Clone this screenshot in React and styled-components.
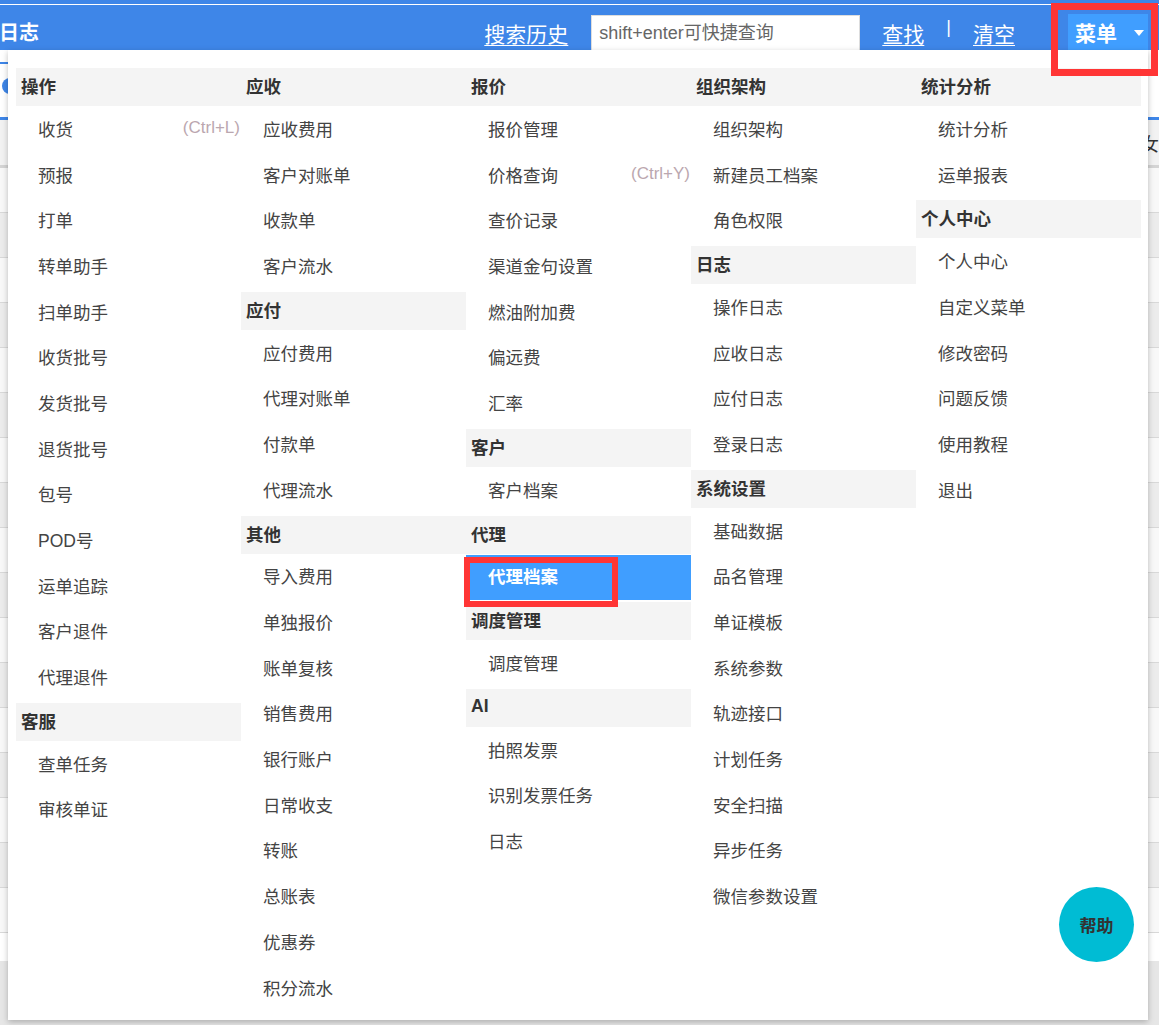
import React from "react";
import styled, { createGlobalStyle } from "styled-components";

const GlobalStyle = createGlobalStyle`
  html, body {
    margin: 0;
    padding: 0;
    background: #e6e6e6;
    font-family: "Liberation Sans", "Noto Sans CJK SC", sans-serif;
  }
  * { box-sizing: border-box; }
`;

const BLUE = "#3e86e8";
const ACTIVE = "#409eff";

const menuColumns = [
  [
    {
      title: "操作",
      items: [
        { label: "收货", shortcut: "(Ctrl+L)" },
        { label: "预报" },
        { label: "打单" },
        { label: "转单助手" },
        { label: "扫单助手" },
        { label: "收货批号" },
        { label: "发货批号" },
        { label: "退货批号" },
        { label: "包号" },
        { label: "POD号" },
        { label: "运单追踪" },
        { label: "客户退件" },
        { label: "代理退件" },
      ],
    },
    { title: "客服", items: [{ label: "查单任务" }, { label: "审核单证" }] },
  ],
  [
    {
      title: "应收",
      items: [{ label: "应收费用" }, { label: "客户对账单" }, { label: "收款单" }, { label: "客户流水" }],
    },
    {
      title: "应付",
      items: [{ label: "应付费用" }, { label: "代理对账单" }, { label: "付款单" }, { label: "代理流水" }],
    },
    {
      title: "其他",
      items: [
        { label: "导入费用" },
        { label: "单独报价" },
        { label: "账单复核" },
        { label: "销售费用" },
        { label: "银行账户" },
        { label: "日常收支" },
        { label: "转账" },
        { label: "总账表" },
        { label: "优惠券" },
        { label: "积分流水" },
      ],
    },
  ],
  [
    {
      title: "报价",
      items: [
        { label: "报价管理" },
        { label: "价格查询", shortcut: "(Ctrl+Y)" },
        { label: "查价记录" },
        { label: "渠道金句设置" },
        { label: "燃油附加费" },
        { label: "偏远费" },
        { label: "汇率" },
      ],
    },
    { title: "客户", items: [{ label: "客户档案" }] },
    { title: "代理", items: [{ label: "代理档案", active: true }] },
    { title: "调度管理", items: [{ label: "调度管理" }] },
    { title: "AI", items: [{ label: "拍照发票" }, { label: "识别发票任务" }, { label: "日志" }] },
  ],
  [
    {
      title: "组织架构",
      items: [{ label: "组织架构" }, { label: "新建员工档案" }, { label: "角色权限" }],
    },
    {
      title: "日志",
      items: [{ label: "操作日志" }, { label: "应收日志" }, { label: "应付日志" }, { label: "登录日志" }],
    },
    {
      title: "系统设置",
      items: [
        { label: "基础数据" },
        { label: "品名管理" },
        { label: "单证模板" },
        { label: "系统参数" },
        { label: "轨迹接口" },
        { label: "计划任务" },
        { label: "安全扫描" },
        { label: "异步任务" },
        { label: "微信参数设置" },
      ],
    },
  ],
  [
    { title: "统计分析", items: [{ label: "统计分析" }, { label: "运单报表" }] },
    {
      title: "个人中心",
      items: [
        { label: "个人中心" },
        { label: "自定义菜单" },
        { label: "修改密码" },
        { label: "问题反馈" },
        { label: "使用教程" },
        { label: "退出" },
      ],
    },
  ],
];

/* ---------- page behind the dropdown ---------- */

const Page = styled.div`
  position: relative;
  width: 1159px;
  height: 1025px;
  overflow: hidden;
  background: #e6e6e6;
`;

const TopLine = styled.div`
  height: 5px;
  background: ${BLUE};
  border-bottom: 1px solid #fff;
`;

const Header = styled.div`
  height: 45px;
  background: ${BLUE};
  display: flex;
  align-items: flex-end;
  color: #fff;
`;

const Title = styled.div`
  font-family: "Noto Sans CJK SC", sans-serif;
  font-weight: 700;
  font-size: 20px;
  line-height: 20px;
  margin-left: -1px;
  padding-bottom: 8px;
`;

const Tools = styled.div`
  margin-left: auto;
  display: flex;
  align-items: flex-end;
  height: 100%;
`;

const HeadLink = styled.span`
  font-family: "Noto Sans CJK SC", sans-serif;
  font-size: 21px;
  line-height: 21px;
  text-decoration: underline;
  text-underline-offset: 3px;
  text-decoration-thickness: 1px;
  padding-bottom: 6px;
  margin-left: ${(p) => p.$gap || 0}px;
`;

const Divider = styled.span`
  font-size: 18px;
  line-height: 18px;
  padding-bottom: 14px;
  margin-left: 22px;
`;

const SearchInput = styled.input`
  width: 269px;
  height: 35px;
  margin-left: 23px;
  border: 1px solid #ddd;
  border-bottom: none;
  padding: 0 7px;
  font-size: 18px;
  font-family: "Liberation Sans", "Noto Sans CJK SC", sans-serif;
  color: #333;
  outline: none;
  &::placeholder {
    color: #666;
  }
`;

const MenuButton = styled.div`
  width: 80px;
  height: 36px;
  margin-left: 53px;
  margin-right: 11px;
  background: ${ACTIVE};
  display: flex;
  align-items: center;
  padding-left: 7px;
  font-family: "Noto Sans CJK SC", sans-serif;
  font-weight: 700;
  font-size: 21px;
  color: #fff;
`;

const Caret = styled.span`
  margin-left: 17px;
  width: 0;
  height: 0;
  border-left: 5px solid transparent;
  border-right: 5px solid transparent;
  border-top: 6px solid #fff;
  margin-top: 2px;
`;

const SubBar = styled.div`
  height: 70px;
  background: #fff;
  border-bottom: 3px solid ${BLUE};
`;

const Tab = styled.div`
  width: 120px;
  height: 14px;
  border-bottom: 2px solid ${BLUE};
`;

const RoundBtn = styled.div`
  width: 30px;
  height: 16px;
  margin-top: 14px;
  margin-left: 2px;
  border-radius: 8px;
  background: ${BLUE};
`;

const Table = styled.div`
  display: flex;
  flex-direction: column;
  background: #fff;
  padding-bottom: 28px;
`;

const HeadRow = styled.div`
  height: 48px;
  background: #f2f2f2;
  border-bottom: 3px solid #d4d4d4;
  display: flex;
  align-items: center;
  justify-content: flex-end;
  font-family: "Noto Sans CJK SC", sans-serif;
  font-size: 18px;
  color: #333;
`;

const Row = styled.div`
  height: 45px;
  border-bottom: 1px solid #d8d8d8;
  background: ${(p) => (p.$alt ? "#ececec" : "#f8f8f8")};
`;

/* ---------- dropdown ---------- */

const Dropdown = styled.div`
  position: absolute;
  left: 8px;
  top: 50px;
  width: 1140px;
  height: 970px;
  background: #fff;
  box-shadow: 0 2px 6px rgba(0, 0, 0, 0.25);
  padding: 16px 7px 0 8px;
  display: flex;
`;

const Column = styled.div`
  width: 225px;
  display: flex;
  flex-direction: column;
`;

const SectionTitle = styled.div`
  height: 38px;
  margin: 2px 0 1px;
  background: #f4f4f4;
  padding: 0 0 3px 5px;
  display: flex;
  align-items: center;
  font-family: "Liberation Sans", "Noto Sans CJK SC", sans-serif;
  font-weight: 700;
  font-size: 17.5px;
  color: #333;
`;

const Item = styled.div`
  position: relative;
  height: 45.7px;
  padding: 0 1px 3px 22px;
  display: flex;
  align-items: center;
  justify-content: space-between;
  font-family: "Liberation Sans", "Noto Sans CJK SC", sans-serif;
  font-size: 17.5px;
  font-weight: ${(p) => (p.$active ? 700 : 400)};
  color: ${(p) => (p.$active ? "#fff" : "#444")};
  background: ${(p) => (p.$active ? ACTIVE : "transparent")};
`;

const Shortcut = styled.span`
  font-family: "Liberation Sans", sans-serif;
  font-size: 17px;
  color: #bba7af;
`;

const Mark = styled.div`
  position: absolute;
  border: ${(p) => p.$w}px solid #ff3535;
  pointer-events: none;
`;

const ItemMark = styled(Mark)`
  left: -2px;
  top: 2px;
  width: 154px;
  height: 50px;
`;

const MenuMark = styled(Mark)`
  left: 1051px;
  top: 3px;
  width: 107px;
  height: 73px;
`;

const HelpButton = styled.div`
  position: absolute;
  left: 1059px;
  top: 887px;
  width: 75px;
  height: 75px;
  border-radius: 50%;
  background: #00bcd4;
  display: flex;
  align-items: center;
  justify-content: center;
  font-family: "Noto Sans CJK SC", sans-serif;
  font-weight: 700;
  font-size: 17px;
  color: #333;
`;

const App = () => {
  return (
    <Page>
      <GlobalStyle />
      <TopLine />
      <Header>
        <Title>日志</Title>
        <Tools>
          <HeadLink>搜索历史</HeadLink>
          <SearchInput placeholder="shift+enter可快捷查询" />
          <HeadLink $gap={22}>查找</HeadLink>
          <Divider>|</Divider>
          <HeadLink $gap={22}>清空</HeadLink>
          <MenuButton>
            菜单
            <Caret />
          </MenuButton>
        </Tools>
      </Header>
      <SubBar>
        <Tab />
        <RoundBtn />
      </SubBar>
      <Table>
        <HeadRow>女</HeadRow>
        {Array.from({ length: 17 }).map((_, i) => (
          <Row key={i} $alt={i % 2 === 1} />
        ))}
      </Table>

      <Dropdown>
        {menuColumns.map((sections, ci) => (
          <Column key={ci}>
            {sections.map((section) => (
              <React.Fragment key={section.title}>
                <SectionTitle>{section.title}</SectionTitle>
                {section.items.map((item) => (
                  <Item key={item.label} $active={item.active}>
                    <span>{item.label}</span>
                    {item.shortcut && <Shortcut>{item.shortcut}</Shortcut>}
                    {item.active && <ItemMark $w={6} />}
                  </Item>
                ))}
              </React.Fragment>
            ))}
          </Column>
        ))}
      </Dropdown>

      <HelpButton>帮助</HelpButton>
      <MenuMark $w={7} />
    </Page>
  );
};

export default App;
